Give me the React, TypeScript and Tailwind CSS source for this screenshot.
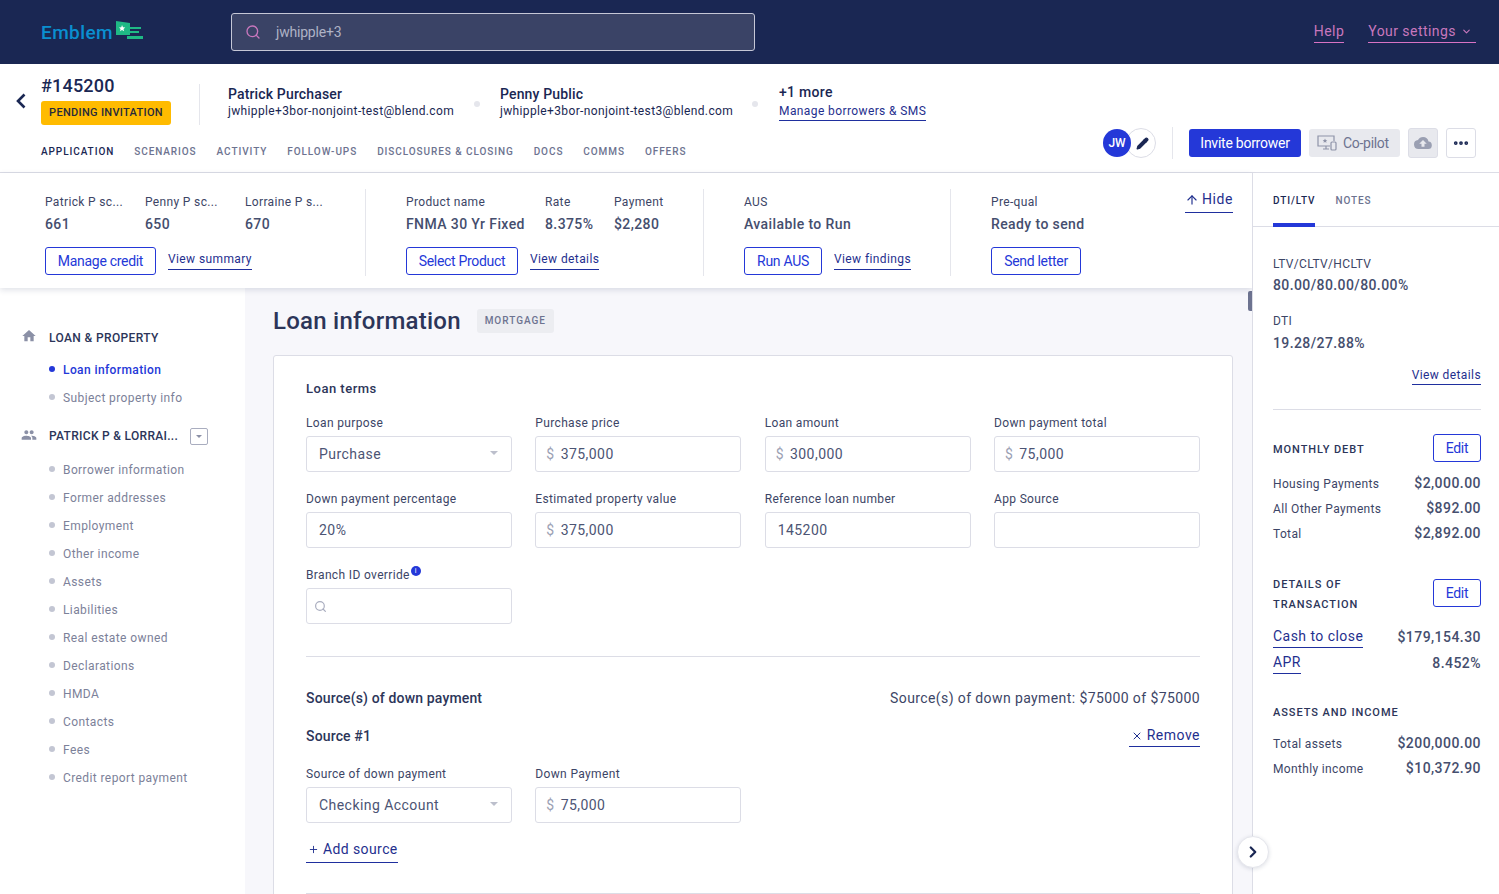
import React from "react";
import { ChevronDown, ChevronRight, Ellipsis, Pencil, Search, X, Plus, ArrowUp } from "lucide-react";

const tabs = ["SCENARIOS", "ACTIVITY", "FOLLOW-UPS", "DISCLOSURES & CLOSING", "DOCS", "COMMS", "OFFERS"];

const borrowerLinks = [
  "Borrower information",
  "Former addresses",
  "Employment",
  "Other income",
  "Assets",
  "Liabilities",
  "Real estate owned",
  "Declarations",
  "HMDA",
  "Contacts",
  "Fees",
  "Credit report payment",
];

const Caret = ({ className }: { className: string }) => (
  <svg viewBox="0 0 8 4" className={className} fill="currentColor">
    <path d="M0 0h8L4 4z" />
  </svg>
);

const LinkText = ({ children }: { children: React.ReactNode }) => (
  <span className="border-b border-[#1f2f9e] pb-[2px] text-[12px] leading-[15px] tracking-[0.4px] text-[#1f2f8e]">
    {children}
  </span>
);

const OutlineButton = ({ children, w }: { children: React.ReactNode; w: string }) => (
  <button className={`h-[28px] ${w} shrink-0 rounded-[3px] border border-[#2438d8] bg-white text-[14px] tracking-[-0.3px] text-[#2438d8]`}>
    {children}
  </button>
);

const Field = ({ label, value, dollar, select }: { label: string; value?: string; dollar?: boolean; select?: boolean }) => (
  <div>
    <div className="h-[18px] text-[12px] leading-[12px] tracking-[0.35px] text-[#3c4566]">{label}</div>
    <div className="mt-[1px] flex h-[36px] items-center rounded-[3px] border border-[#dcdde6] bg-white pr-[13px] text-[14px] tracking-[0.45px] text-[#4c5474]">
      {dollar ? (
        <span className="ml-[10px] mr-[6px] text-[#9ca1b4]">$</span>
      ) : (
        <span className="ml-[12px]" />
      )}
      <span className="flex-1">{value}</span>
      {select && <Caret className="mb-[3px] h-[4px] w-[8px] text-[#bcbfcc]" />}
    </div>
  </div>
);

const Stat = ({ label, value, w }: { label: string; value: string; w: string }) => (
  <div className={w}>
    <div className="text-[12px] leading-[14px] tracking-[0.35px] text-[#3c4566]">{label}</div>
    <div className="mt-[7px] text-[14px] font-medium leading-[17px] tracking-[0.4px] text-[#454e6e]">{value}</div>
  </div>
);

const SideRow = ({ label, value }: { label: string; value: string }) => (
  <div className="flex h-[25px] items-center justify-between">
    <span className="text-[12px] tracking-[0.35px] text-[#3c4566]">{label}</span>
    <span className="text-[14px] font-medium tracking-[0.45px] text-[#454e6e]">{value}</span>
  </div>
);

const NavItem = ({ label, active }: { label: string; active?: boolean }) => (
  <div className="flex h-[28px] items-center">
    <span className={`mb-[3px] ml-[49px] mr-[8px] h-[6px] w-[6px] rounded-full ${active ? "bg-[#2438d8]" : "bg-[#c3c6d3]"}`} />
    <span className={`text-[12px] tracking-[0.4px] ${active ? "font-medium text-[#2438d8]" : "text-[#7c8199]"}`}>{label}</span>
  </div>
);

const App = () => {
  return (
    <div className="flex h-[894px] w-[1499px] flex-col overflow-hidden bg-white font-['Roboto',sans-serif] text-[#1a2753]">
      {/* top bar */}
      <header className="flex h-[64px] shrink-0 items-center bg-[#1a2753] pl-[41px] pr-[23px]">
        <div className="mt-[3px] flex w-[190px] items-center">
          <span className="text-[19px] font-medium tracking-[0.4px] text-[#0a8fd0]">Emblem</span>
          <svg viewBox="0 0 28 22" className="mb-[3px] ml-[2px] h-[22px] w-[28px]">
            <path d="M1 0l14 2v12L1 14z" fill="#1fb985" />
            <path d="M7 4l1 2.2 2.3.2-1.8 1.5.6 2.3L7 9l-2 1.2.6-2.3L4 6.4l2.3-.2z" fill="#fff" />
            <path d="M15 6h11v2H15zM12 15h16v3H12zM15 10h9v2H15z" fill="#1fb985" />
          </svg>
        </div>
        <div className="flex h-[38px] w-[524px] items-center rounded-[3px] border border-[#c5c7d6] bg-[#3a4366] pl-[13px]">
          <Search className="h-[16px] w-[16px] text-[#c877bd]" strokeWidth={2} />
          <span className="ml-[15px] text-[14px] tracking-[-0.2px] text-[#aeb2c5]">jwhipple+3</span>
        </div>
        <div className="ml-auto flex items-center gap-[24px] text-[14px] tracking-[0.45px] text-[#c877bd]">
          <span className="border-b border-[#d873c4]">Help</span>
          <span className="flex items-center border-b border-[#d873c4]">
            Your settings
            <ChevronDown className="ml-[5px] mr-[4px] h-[11px] w-[11px]" strokeWidth={2.5} />
          </span>
        </div>
      </header>

      {/* loan header */}
      <section className="relative h-[109px] shrink-0 border-b border-[#dcdde6]">
        <div className="flex pl-[15px] pt-[11px]">
          <svg viewBox="0 0 12 16" className="mt-[18px] h-[16px] w-[12px]" fill="none" stroke="#1a2753" strokeWidth="2.6">
            <path d="M9.5 1.5L3 8l6.5 6.5" />
          </svg>
          <div className="ml-[14px] w-[158px]">
            <div className="text-[18px] font-medium leading-[22px] tracking-[0.2px]">#145200</div>
            <div className="mt-[4px] flex h-[24px] w-[130px] items-center justify-center rounded-[3px] bg-[#ffbb00] text-[11px] font-medium tracking-[0.3px] text-[#262a3c]">
              PENDING INVITATION
            </div>
          </div>
          <div className="mt-[9px] h-[41px] w-px bg-[#e5e6ec]" />
          <div className="ml-[28px] mt-[11px] w-[246px]">
            <div className="text-[14px] font-medium leading-[17px] tracking-[0.15px]">Patrick Purchaser</div>
            <div className="whitespace-nowrap text-[12px] leading-[16px] tracking-[0.36px]">jwhipple+3bor-nonjoint-test@blend.com</div>
          </div>
          <span className="mt-[26px] h-[6px] w-[6px] rounded-full bg-[#e5e6ec]" />
          <div className="ml-[20px] mt-[11px] w-[252px]">
            <div className="text-[14px] font-medium leading-[17px] tracking-[0.15px]">Penny Public</div>
            <div className="whitespace-nowrap text-[12px] leading-[16px] tracking-[0.36px]">jwhipple+3bor-nonjoint-test3@blend.com</div>
          </div>
          <span className="mt-[26px] h-[6px] w-[6px] rounded-full bg-[#e5e6ec]" />
          <div className="ml-[21px] mt-[9px]">
            <div className="text-[14px] font-medium leading-[17px] tracking-[0.3px]">+1 more</div>
            <div className="mt-[-3px] pb-[1px]"><LinkText>Manage borrowers &amp; SMS</LinkText></div>
          </div>
        </div>
        <div className="absolute bottom-[14px] left-[41px] flex gap-[20px] text-[10px] font-medium leading-[12px] tracking-[0.92px] text-[#6d7390]">
          <span className="text-[#1a2753]">APPLICATION</span>
          {tabs.map((t) => (
            <span key={t}>{t}</span>
          ))}
        </div>
        <div className="absolute right-[23px] top-[63px] flex items-center">
          <span className="z-10 flex h-[28px] w-[28px] items-center justify-center rounded-full bg-[#2438d8] text-[12px] font-medium text-white">JW</span>
          <span className="ml-[-5px] flex h-[30px] w-[30px] items-center justify-center rounded-full border border-[#dcdde6] bg-white">
            <Pencil className="ml-[3px] h-[13px] w-[13px] fill-[#1a2753] text-[#1a2753]" />
          </span>
          <div className="ml-[16px] h-[32px] w-px bg-[#e5e6ec]" />
          <button className="ml-[16px] h-[28px] w-[112px] rounded-[3px] bg-[#2438d8] text-[14px] tracking-[-0.25px] text-white">Invite borrower</button>
          <button className="ml-[8px] flex h-[28px] w-[91px] items-center gap-[6px] rounded-[3px] bg-[#e8e9ee] pl-[8px] text-[14px] tracking-[-0.3px] text-[#6d7390]">
            <svg viewBox="0 0 20 16" className="h-[16px] w-[20px]" fill="none" stroke="#8e93a8" strokeWidth="1.2">
              <path d="M13 11H1V1h16v5M6 14h6M9 11v3" />
              <rect x="14" y="7" width="5" height="8" rx="1" />
              <path d="M8 3.5l.7 1.5 1.6.1-1.2 1 .4 1.6L8 6.9l-1.5.9.4-1.6-1.2-1 1.6-.1z" fill="#8e93a8" stroke="none" />
            </svg>
            Co-pilot
          </button>
          <button className="ml-[8px] flex h-[30px] w-[30px] items-center justify-center rounded-[3px] border border-[#dcdde6] bg-[#e8e9ee]">
            <svg viewBox="0 0 24 24" className="h-[18px] w-[18px]" fill="#9a9fb2">
              <path d="M19.35 10.04A7.49 7.49 0 0 0 12 4a7.5 7.5 0 0 0-6.65 4.04A6 6 0 0 0 6 20h13a5 5 0 0 0 .35-9.96zM14 13v4h-4v-4H7l5-5 5 5h-3z" />
            </svg>
          </button>
          <button className="ml-[8px] flex h-[30px] w-[30px] items-center justify-center rounded-[3px] border border-[#dcdde6] bg-white">
            <Ellipsis className="h-[18px] w-[18px] text-[#1a2753]" strokeWidth={3} />
          </button>
        </div>
      </section>

      <div className="flex min-h-0 flex-1">
        <div className="flex min-w-0 flex-1 flex-col">
          {/* summary strip */}
          <section className="relative z-10 flex h-[115px] shrink-0 pl-[45px] pt-[22px] shadow-[0_2px_6px_rgba(26,39,83,0.14)]">
            <div className="w-[320px]">
              <div className="flex">
                <Stat label="Patrick P sc..." value="661" w="w-[100px]" />
                <Stat label="Penny P sc..." value="650" w="w-[100px]" />
                <Stat label="Lorraine P s..." value="670" w="w-[100px]" />
              </div>
              <div className="mt-[14px] flex items-center gap-[12px]">
                <OutlineButton w="w-[111px]">Manage credit</OutlineButton>
                <LinkText>View summary</LinkText>
              </div>
            </div>
            <div className="mb-[12px] mt-[-6px] w-px bg-[#e5e6ec]" />
            <div className="ml-[40px] w-[297px]">
              <div className="flex">
                <Stat label="Product name" value="FNMA 30 Yr Fixed" w="w-[139px]" />
                <Stat label="Rate" value="8.375%" w="w-[69px]" />
                <Stat label="Payment" value="$2,280" w="w-[70px]" />
              </div>
              <div className="mt-[14px] flex items-center gap-[12px]">
                <OutlineButton w="w-[112px]">Select Product</OutlineButton>
                <LinkText>View details</LinkText>
              </div>
            </div>
            <div className="mb-[12px] mt-[-6px] w-px bg-[#e5e6ec]" />
            <div className="ml-[40px] w-[206px]">
              <Stat label="AUS" value="Available to Run" w="w-full" />
              <div className="mt-[14px] flex items-center gap-[12px]">
                <OutlineButton w="w-[78px]">Run AUS</OutlineButton>
                <LinkText>View findings</LinkText>
              </div>
            </div>
            <div className="mb-[12px] mt-[-6px] w-px bg-[#e5e6ec]" />
            <div className="ml-[40px] w-[120px]">
              <Stat label="Pre-qual" value="Ready to send" w="w-full" />
              <div className="mt-[14px]">
                <OutlineButton w="w-[90px]">Send letter</OutlineButton>
              </div>
            </div>
            <div className="absolute right-[19px] top-[16px] flex items-center border-b border-[#1f2f9e] pb-[2px] text-[14px] tracking-[0.6px] text-[#1f2f8e]">
              <ArrowUp className="mr-[3px] h-[14px] w-[14px]" strokeWidth={2} />
              Hide
            </div>
          </section>

          <div className="flex min-h-0 flex-1">
            {/* section nav */}
            <nav className="w-[245px] shrink-0 bg-white pt-[40px]">
              <div className="flex h-[20px] items-center pl-[21px]">
                <svg viewBox="0 0 24 24" className="mb-[5px] h-[16px] w-[16px]" fill="#8b90a6">
                  <path d="M10 20v-6h4v6h5v-8h3L12 3 2 12h3v8z" />
                </svg>
                <span className="ml-[12px] text-[12px] font-medium tracking-[0.37px] text-[#2c3559]">LOAN &amp; PROPERTY</span>
              </div>
              <div className="mt-[8px]">
                <NavItem label="Loan information" active />
                <NavItem label="Subject property info" />
              </div>
              <div className="mt-[14px] flex h-[20px] items-center pl-[21px]">
                <svg viewBox="0 0 24 24" className="mb-[3px] h-[16px] w-[16px]" fill="#8b90a6">
                  <path d="M16 11c1.66 0 3-1.34 3-3s-1.34-3-3-3-3 1.34-3 3 1.34 3 3 3zm-8 0c1.66 0 3-1.34 3-3S9.66 5 8 5 5 6.34 5 8s1.34 3 3 3zm0 2c-2.33 0-7 1.17-7 3.5V19h14v-2.5C15 14.17 10.33 13 8 13zm8 0c-.29 0-.62.02-.97.05 1.16.84 1.97 1.97 1.97 3.45V19h6v-2.5c0-2.33-4.67-3.5-7-3.5z" />
                </svg>
                <span className="ml-[12px] text-[12px] font-medium tracking-[0.3px] text-[#2c3559]">PATRICK P &amp; LORRAI...</span>
                <span className="ml-[12px] flex h-[17px] w-[18px] items-center justify-center rounded-[2px] border border-[#a9adbf]">
                  <Caret className="h-[3px] w-[6px] text-[#8b90a6]" />
                </span>
              </div>
              <div className="mt-[10px]">
                {borrowerLinks.map((l) => (
                  <NavItem key={l} label={l} />
                ))}
              </div>
            </nav>

            {/* main form */}
            <main className="relative min-w-0 flex-1 bg-[#f7f7fb] pl-[28px] pr-[19px]">
              <span className="absolute right-0 top-[3px] h-[20px] w-[4px] rounded-l-[2px] bg-[#6d7390]" />
              <div className="flex h-[67px] items-center pb-[2px]">
                <h1 className="text-[24px] font-medium tracking-[0.25px] text-[#2c3559]">Loan information</h1>
                <span className="ml-[16px] flex h-[24px] w-[77px] items-center justify-center rounded-[3px] bg-[#ecedf1] text-[10px] font-medium tracking-[1px] text-[#6d7390]">MORTGAGE</span>
              </div>
              <div className="h-[600px] rounded-[3px] border border-[#dcdde6] bg-white px-[32px] pt-[25px]">
                <div className="text-[13px] font-medium leading-[16px] tracking-[0.5px] text-[#2c3559]">Loan terms</div>
                <div className="mt-[20px] grid grid-cols-4 gap-x-[23.3px] gap-y-[21px]">
                  <Field label="Loan purpose" value="Purchase" select />
                  <Field label="Purchase price" value="375,000" dollar />
                  <Field label="Loan amount" value="300,000" dollar />
                  <Field label="Down payment total" value="75,000" dollar />
                  <Field label="Down payment percentage" value="20%" />
                  <Field label="Estimated property value" value="375,000" dollar />
                  <Field label="Reference loan number" value="145200" />
                  <Field label="App Source" />
                  <div>
                    <div className="flex h-[18px] text-[12px] leading-[12px] tracking-[0.35px] text-[#3c4566]">
                      Branch ID override
                      <span className="mt-[-3px] ml-[1px] flex h-[10px] w-[10px] items-center justify-center rounded-full bg-[#2438d8] text-[7px] leading-none text-white">i</span>
                    </div>
                    <div className="mt-[1px] flex h-[36px] items-center rounded-[3px] border border-[#dcdde6] pl-[7px]">
                      <Search className="h-[13px] w-[13px] text-[#a9adbf]" strokeWidth={2.2} />
                    </div>
                  </div>
                </div>
                <div className="mt-[32px] border-t border-[#dcdde6]" />
                <div className="mt-[31px] flex items-center justify-between">
                  <span className="text-[14px] font-medium tracking-[0.15px] text-[#2c3559]">Source(s) of down payment</span>
                  <span className="text-[14px] tracking-[0.4px] text-[#3c4566]">Source(s) of down payment: $75000 of $75000</span>
                </div>
                <div className="mt-[17px] flex h-[20px] items-center justify-between">
                  <span className="text-[14px] font-medium tracking-[0.15px] text-[#2c3559]">Source #1</span>
                  <span className="flex items-center border-b border-[#1f2f9e] pl-[2px] text-[14px] tracking-[0.5px] text-[#1f2f8e]">
                    <X className="mr-[4px] h-[12px] w-[12px]" />
                    Remove
                  </span>
                </div>
                <div className="mt-[22px] grid grid-cols-4 gap-x-[23.3px]">
                  <Field label="Source of down payment" value="Checking Account" select />
                  <Field label="Down Payment" value="75,000" dollar />
                </div>
                <div className="mt-[16px] flex">
                  <span className="flex items-center border-b border-[#1f2f9e] pb-[2px] pl-[2px] text-[14px] tracking-[0.4px] text-[#1f2f8e]">
                    <Plus className="mr-[4px] h-[11px] w-[11px]" />
                    Add source
                  </span>
                </div>
                <div className="mt-[30px] border-t border-[#dcdde6]" />
              </div>
            </main>
          </div>
        </div>

        {/* right panel */}
        <aside className="relative z-20 w-[247px] shrink-0 border-l border-[#dcdde6] bg-white">
          <div className="flex h-[54px] gap-[20px] border-b border-[#dcdde6] pl-[20px] text-[10px] font-medium tracking-[0.92px] text-[#6d7390]">
            <span className="h-[54px] border-b-[4px] border-[#2438d8] pt-[20px] text-[#1a2753]">DTI/LTV</span>
            <span className="pt-[20px]">NOTES</span>
          </div>
          <div className="px-[20px] pr-[18px]">
            <div className="mt-[30px] text-[12px] leading-[14px] tracking-[0.35px] text-[#3c4566]">LTV/CLTV/HCLTV</div>
            <div className="mt-[6px] text-[14px] font-medium leading-[17px] tracking-[0.4px] text-[#454e6e]">80.00/80.00/80.00%</div>
            <div className="mt-[20px] text-[12px] leading-[14px] tracking-[0.35px] text-[#3c4566]">DTI</div>
            <div className="mt-[7px] text-[14px] font-medium leading-[17px] tracking-[0.4px] text-[#454e6e]">19.28/27.88%</div>
            <div className="mt-[10px] text-right"><LinkText>View details</LinkText></div>
            <div className="mt-[23px] border-t border-[#dcdde6]" />
            <div className="mt-[24px] flex items-center justify-between">
              <span className="mt-[4px] text-[11px] font-medium tracking-[0.95px] text-[#2c3559]">MONTHLY DEBT</span>
              <OutlineButton w="w-[48px]">Edit</OutlineButton>
            </div>
            <div className="mt-[9px]">
              <SideRow label="Housing Payments" value="$2,000.00" />
              <SideRow label="All Other Payments" value="$892.00" />
              <SideRow label="Total" value="$2,892.00" />
            </div>
            <div className="mt-[33px] flex items-start justify-between">
              <span className="mt-[-4px] text-[11px] font-medium leading-[20px] tracking-[0.95px] text-[#2c3559]">DETAILS OF<br />TRANSACTION</span>
              <OutlineButton w="w-[48px]">Edit</OutlineButton>
            </div>
            <div className="mt-[9px] flex h-[26px] items-center justify-between text-[14px] tracking-[0.45px] text-[#454e6e]">
              <span className="border-b border-[#1f2f9e] text-[#1f2f8e]">Cash to close</span>
              <span className="font-medium">$179,154.30</span>
            </div>
            <div className="flex h-[26px] items-center justify-between text-[14px] tracking-[0.45px] text-[#454e6e]">
              <span className="border-b border-[#1f2f9e] text-[#1f2f8e]">APR</span>
              <span className="font-medium">8.452%</span>
            </div>
            <div className="mt-[27px] text-[11px] font-medium leading-[20px] tracking-[0.95px] text-[#2c3559]">ASSETS AND INCOME</div>
            <div className="mt-[8px]">
              <SideRow label="Total assets" value="$200,000.00" />
              <SideRow label="Monthly income" value="$10,372.90" />
            </div>
          </div>
          <button className="absolute bottom-[26px] left-[-16px] flex h-[32px] w-[32px] items-center justify-center rounded-full border border-[#e5e6ec] bg-white shadow-[0_1px_4px_rgba(26,39,83,0.15)]">
            <ChevronRight className="h-[18px] w-[18px] text-[#1a2753]" strokeWidth={3} />
          </button>
        </aside>
      </div>
    </div>
  );
};

export default App;
